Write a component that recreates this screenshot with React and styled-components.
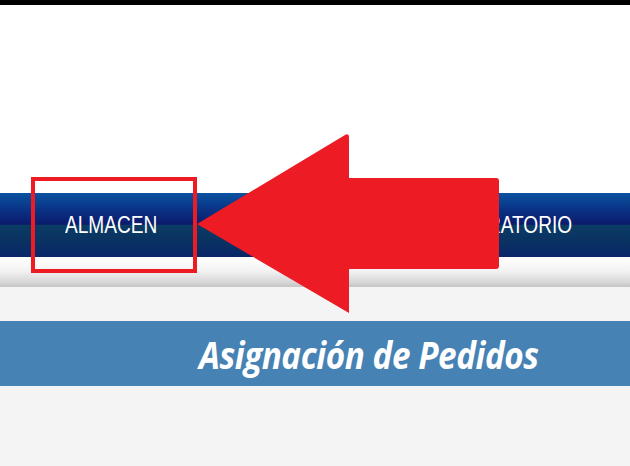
import React from "react";
import styled, { createGlobalStyle } from "styled-components";

const GlobalStyle = createGlobalStyle`
  html, body {
    margin: 0;
    padding: 0;
    background: #f4f4f4;
  }
  #root {
    width: 630px;
    height: 466px;
    overflow: hidden;
  }
`;

const Page = styled.div`
  position: relative;
  width: 630px;
  height: 466px;
  background: #f4f4f4;
  display: flex;
  flex-direction: column;
`;

const TopBar = styled.div`
  height: 5px;
  background: #000;
`;

const Header = styled.div`
  height: 188px;
  background: #fff;
`;

const Nav = styled.nav`
  height: 64px;
  display: flex;
  align-items: center;
  padding-left: 65px;
  background: linear-gradient(
    to bottom,
    #0a52a0 0%,
    #0a3486 25%,
    #0b1a6c 49%,
    #0a3c64 50%,
    #0a3262 75%,
    #0a2668 100%
  );
`;

const NavItem = styled.span`
  display: inline-block;
  font-family: "Liberation Sans", Arial, sans-serif;
  font-size: 23px;
  color: #fff;
  margin-left: ${(p) => p.offset || 0}px;
  white-space: nowrap;
  transform: scaleX(0.83);
  transform-origin: left center;
`;

const Shade = styled.div`
  height: 30px;
  background: linear-gradient(to bottom, #ffffff 0%, #f3f3f3 45%, #d6d6d6 85%, #c4c4c4 100%);
`;

const Gap = styled.div`
  height: 34px;
`;

const TitleBar = styled.div`
  height: 65px;
  background: #4682b4;
  display: flex;
  align-items: center;
  padding-left: 199px;
`;

const Title = styled.h1`
  margin: 0;
  font-family: "Open Sans", "DejaVu Sans", sans-serif;
  font-style: italic;
  font-weight: 700;
  font-size: 38px;
  color: #fff;
  transform: scaleX(0.875);
  transform-origin: left center;
  white-space: nowrap;
  letter-spacing: -0.5px;
`;

const Marker = styled.div`
  position: absolute;
  left: 31px;
  top: 177px;
  width: 166px;
  height: 96px;
  box-sizing: border-box;
  border: 4px solid #ed1c24;
`;

const Arrow = styled.svg`
  position: absolute;
  left: 0;
  top: 0;
  pointer-events: none;
`;

export default function App() {
  return (
    <>
      <GlobalStyle />
      <Page>
        <TopBar />
        <Header />
        <Nav>
          <NavItem>ALMACEN</NavItem>
          <NavItem offset={260}>LABORATORIO</NavItem>
        </Nav>
        <Shade />
        <Gap />
        <TitleBar>
          <Title>Asignación de Pedidos</Title>
        </TitleBar>
        <Marker />
        <Arrow width="630" height="466" viewBox="0 0 630 466">
          <path
            d="M197 224 L345 135 Q349 133 349 137 L349 178 L496 178 Q499 178 499 181 L499 266 Q499 269 496 269 L349 269 L349 313 Z"
            fill="#ed1c24"
          />
        </Arrow>
      </Page>
    </>
  );
}
